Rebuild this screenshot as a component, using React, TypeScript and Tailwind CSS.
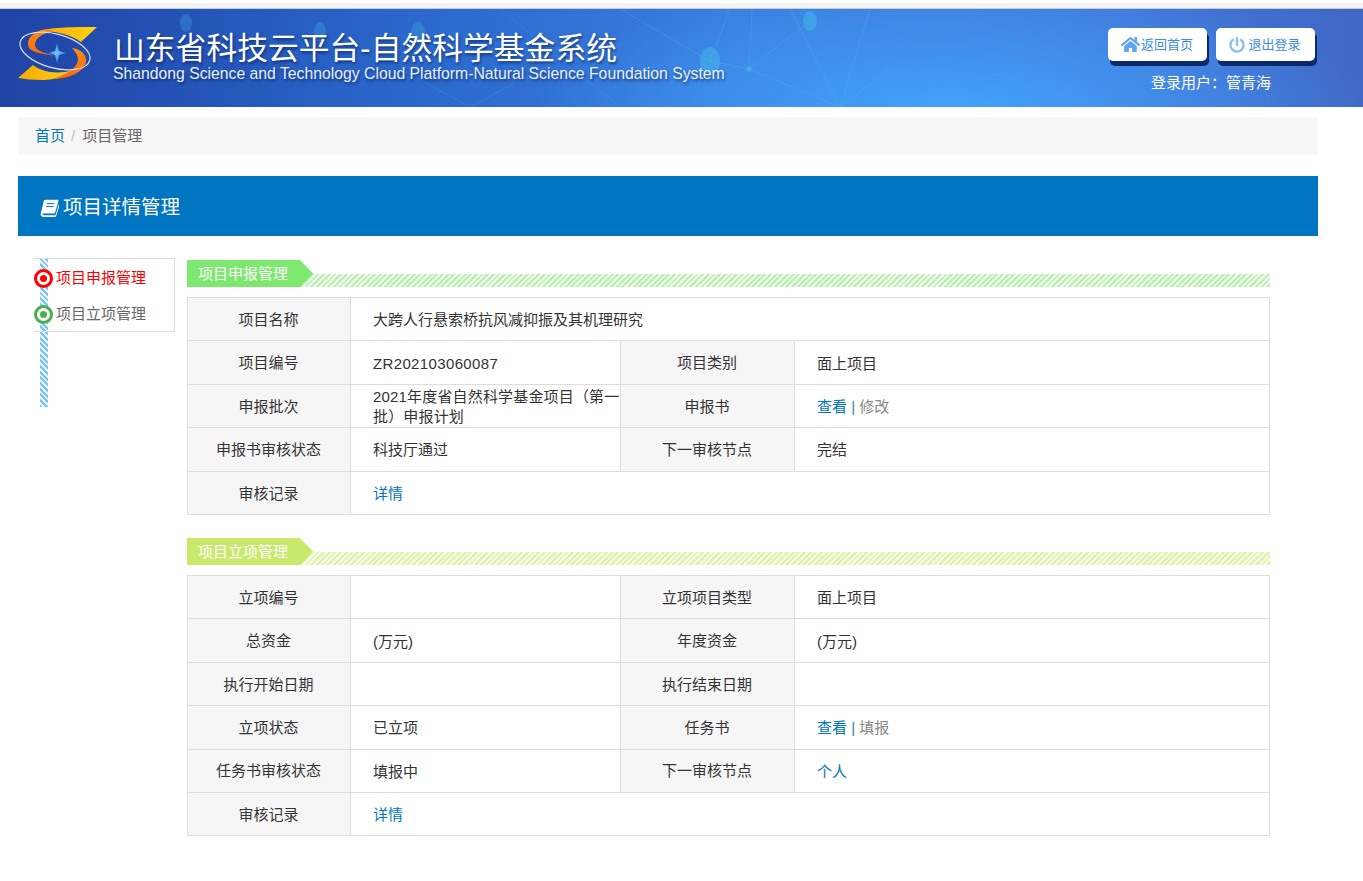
import React from 'react';
import { FaHome, FaPowerOff } from 'react-icons/fa';

const FONT = "font-['Liberation_Sans','Noto_Sans_CJK_SC',sans-serif]";

const labelCell = 'border border-[#ddd] bg-[#f6f6f6] text-center font-normal align-middle pl-[7px] pr-2 pt-[2px] pb-0';
const valueCell = 'border border-[#ddd] align-middle pl-[22px] pr-0 pt-[2px] pb-0 leading-[20px]';

const BookIcon = () => (
  <svg width="19" height="18" viewBox="0 0 19 18" fill="none">
    <path d="M5.2.8h12c1 0 1.4.7 1.1 1.6l-3 10.5c-.4 1.2-1 1.7-2.2 1.7H3.4c-.7 0-1.1.4-.9.9.2.5.7.7 1.4.7h10.8c.5 0 .9-.3 1.1-.8l3-10.2c.5.3.7.8.5 1.5l-2.900 9.700c-.3 1-1 1.600-2.100 1.600H3.600C1.900 18 .5 16.800.7 15.200c0-.4.1-.8.2-1.200L3.500 2.900C3.700 1.700 4.300.8 5.200.8z" fill="#fff" />
    <path d="M6.800 4.600h7.600M6 7.400h7.600" stroke="#0075c2" strokeWidth="1" />
  </svg>
);

const Logo = () => (
  <svg width="82" height="58" viewBox="0 0 82 58">
    <defs>
      <linearGradient id="lg-yellow" x1="0" y1="0" x2="1" y2="0">
        <stop offset="0" stopColor="#f9a800" />
        <stop offset="1" stopColor="#ffd414" />
      </linearGradient>
      <linearGradient id="lg-orange" x1="0" y1="0" x2="0" y2="1">
        <stop offset="0" stopColor="#ff8c14" />
        <stop offset="1" stopColor="#f5690c" />
      </linearGradient>
      <radialGradient id="lg-star">
        <stop offset="0" stopColor="#7cc4ff" />
        <stop offset="1" stopColor="#1f7fe8" />
      </radialGradient>
    </defs>
    <path d="M22 6 C34 2 60 2 80 2 L64 17 C54 9 36 6 22 6Z" fill="url(#lg-yellow)" />
    <path d="M1 53 L16 40 C26 48 44 50 58 44 C50 51 38 55 26 55 C16 55 8 54 1 53Z" fill="url(#lg-yellow)" />
    <path d="M30 4 C16 6 10 14 11 20 C12 27 24 29 40 31 C30 29 18 26 18 20 C18 14 24 8 38 6 Z" fill="url(#lg-orange)" />
    <path d="M55 23 C64 24 70 30 69 37 C67 47 52 54 36 54 C48 50 60 44 61 35 C61 30 58 26 55 23Z" fill="url(#lg-orange)" />
    <ellipse cx="38" cy="26" rx="36" ry="17" transform="rotate(15 38 26)" fill="none" stroke="#d4dfe8" strokeWidth="1.2" />
    <path d="M40 18 L42 26 L49 28 L42 30 L40 38 L38 30 L31 28 L38 26 Z" fill="url(#lg-star)" />
  </svg>
);

const BannerBackground = () => (
  <svg className="absolute inset-0 w-full h-full" viewBox="0 0 1363 98" preserveAspectRatio="none">
    <defs>
      <linearGradient id="banner" x1="0" y1="0" x2="1" y2="0">
        <stop offset="0" stopColor="#1f43a4" />
        <stop offset="0.3" stopColor="#2a68cc" />
        <stop offset="0.55" stopColor="#3a7ede" />
        <stop offset="0.8" stopColor="#4278da" />
        <stop offset="1" stopColor="#4068c6" />
      </linearGradient>
      <radialGradient id="glow" gradientUnits="userSpaceOnUse" cx="950" cy="110" r="420" gradientTransform="translate(0 72) scale(1 0.35)">
        <stop offset="0" stopColor="#42a4fc" stopOpacity="1" />
        <stop offset="1" stopColor="#42a4fc" stopOpacity="0" />
      </radialGradient>
    </defs>
    <rect width="1363" height="98" fill="url(#banner)" />
    <rect width="1363" height="98" fill="url(#glow)" />
    <g fill="#43b4ea" fillOpacity="0.3">
      <ellipse cx="186" cy="14" rx="6" ry="9" />
      <ellipse cx="320" cy="23" rx="6" ry="10" />
      <ellipse cx="418" cy="24" rx="7" ry="11" />
    </g>
    <g fill="#43b4ea" fillOpacity="0.55">
      <ellipse cx="710" cy="52" rx="10" ry="14" />
      <ellipse cx="810" cy="12" rx="7" ry="10" />
      <circle cx="749" cy="60" r="3" />
    </g>
    <g stroke="#5cc4f0" strokeOpacity="0.3" strokeWidth="0.8" fill="none">
      <path d="M730 0 L710 52 L749 60 L810 12 M749 60 L752 0 M749 60 L840 98 L890 60 M840 98 L790 0 M840 98 L870 0 M620 0 L710 52" />
      <path d="M400 60 L470 98 L560 50 L620 98 M560 50 L500 0" strokeOpacity="0.2" />
    </g>
  </svg>
);

const Section = ({ title, bg, stripe, children }: { title: string; bg: string; stripe: string; children: React.ReactNode }) => (
  <div>
    <div className="relative h-[27px] flex items-end">
      <div className={`absolute left-0 right-0 bottom-0 h-[13px] ${stripe}`} />
      <div className={`relative h-[27px] w-[113px] pl-[11px] text-white text-[15px] leading-[27px] ${bg}`}>{title}</div>
      <div className={`relative h-[27px] w-[13px] ${bg} [clip-path:polygon(0_0,100%_50%,0_100%)]`} />
    </div>
    <table className="w-full table-fixed border-collapse mt-[10px] text-[15px] text-[#333]">
      <colgroup>
        <col className="w-[163px]" />
        <col className="w-[270px]" />
        <col className="w-[174px]" />
        <col />
      </colgroup>
      <tbody>{children}</tbody>
    </table>
  </div>
);

const Row = ({ cells }: { cells: [string, React.ReactNode, string?, React.ReactNode?] }) => (
  <tr className="h-[43.4px]">
    <th className={labelCell}>{cells[0]}</th>
    {cells[2] === undefined ? (
      <td className={valueCell} colSpan={3}>{cells[1]}</td>
    ) : (
      <>
        <td className={valueCell}>{cells[1]}</td>
        <th className={labelCell}>{cells[2]}</th>
        <td className={valueCell}>{cells[3]}</td>
      </>
    )}
  </tr>
);

const Blue = ({ children }: { children: React.ReactNode }) => <a className="text-[#0075c2]">{children}</a>;

const ViewEdit = ({ edit }: { edit: string }) => (
  <span>
    <Blue>查看</Blue> <span className="text-[#337ab7]">|</span> <span className="text-[#888]">{edit}</span>
  </span>
);

export default function App() {
  return (
    <div className={`${FONT} bg-white min-h-[881px] text-[15px] text-[#333]`}>
      <div className="h-[9px] pt-[3px]">
        <div className="h-[5px] bg-[#f3f3f3] border-b border-[#ccc] box-content" />
      </div>

      <header className="relative h-[98px] overflow-hidden">
        <BannerBackground />
        <div className="relative flex justify-between h-full">
          <div className="flex pl-[17px] pt-[16px]">
            <Logo />
            <div className="ml-[15px] pt-[7px] text-white [text-shadow:1px_2px_3px_rgba(0,20,80,0.6)]">
              <div className="text-[30.8px] leading-[34px] whitespace-nowrap">山东省科技云平台-自然科学基金系统</div>
              <div className="ml-[-1px] text-[15.75px] leading-[20px] mt-[-2px] whitespace-nowrap text-[#e8f0fa]">Shandong Science and Technology Cloud Platform-Natural Science Foundation System</div>
            </div>
          </div>
          <div className="w-[208px] mr-[48px] pt-[19px] flex flex-col items-center">
            <div className="flex gap-[9px]">
              <button className="w-[99px] h-[33px] bg-white rounded-[5px] shadow-[2px_5px_0_#0a2a6e] text-[#3b8ee0] text-[13px] flex items-center justify-center gap-[1px]">
                <FaHome size={19} color="#5fa6ee" />
                返回首页
              </button>
              <button className="w-[99px] h-[33px] bg-white rounded-[5px] shadow-[2px_5px_0_#0a2a6e] text-[#3b8ee0] text-[13px] flex items-center justify-center gap-[3px]">
                <FaPowerOff size={16} color="#8cc0f2" />
                退出登录
              </button>
            </div>
            <div className="text-white mt-[12px] leading-[20px]">登录用户：管青海</div>
          </div>
        </div>
      </header>

      <nav className="mx-[18px] w-[1300px] mt-[10px] h-[38px] bg-[#f7f7f7] flex items-center pl-[17px]">
        <a className="text-[#0075c2]">首页</a>
        <span className="text-[#bbb] pl-[6px] pr-[7px]">/</span>
        <span className="text-[#666]">项目管理</span>
      </nav>

      <div className="ml-[18px] w-[1300px] mt-[21px] h-[60px] pt-[3px] bg-[#0075c2] flex items-center pl-[22px] text-white text-[19.5px] gap-[4px]">
        <BookIcon />
        项目详情管理
      </div>

      <div className="flex mt-[22px]">
        <aside className="relative ml-[34px] w-[141px] shrink-0 h-[149px]">
          <div className="absolute left-[6px] top-0 w-[8px] h-[149px] bg-[repeating-linear-gradient(45deg,#7cc3ee_0,#7cc3ee_2px,#e3f2fb_2px,#e3f2fb_4px)]" />
          <div className="absolute left-0 top-0 w-[141px] h-[74px] border-y border-r border-[#ddd]" />
          <ul className="relative pt-[2px]">
            <li className="h-[36px] flex items-center text-[#f00]">
              <span className="w-[19px] h-[19px] rounded-full border-[3px] border-[#f00] bg-white flex items-center justify-center">
                <span className="w-[7px] h-[7px] rounded-full bg-[#f00]" />
              </span>
              <span className="ml-[3px]">项目申报管理</span>
            </li>
            <li className="h-[36px] flex items-center text-[#666]">
              <span className="w-[19px] h-[19px] rounded-full border-[3px] border-[#4cae4c] bg-white flex items-center justify-center">
                <span className="w-[7px] h-[7px] rounded-full bg-[#4cae4c]" />
              </span>
              <span className="ml-[3px]">项目立项管理</span>
            </li>
          </ul>
        </aside>

        <main className="ml-[12px] w-[1083px] pt-[2px]">
          <Section
            title="项目申报管理"
            bg="bg-[#7de86e]"
            stripe="bg-[repeating-linear-gradient(135deg,#b8f0b0_0,#b8f0b0_2px,#f0fcee_2px,#f0fcee_4px)]"
          >
            <Row cells={['项目名称', '大跨人行悬索桥抗风减抑振及其机理研究']} />
            <Row cells={['项目编号', <span className="tracking-[0.36px]">ZR202103060087</span>, '项目类别', '面上项目']} />
            <Row cells={['申报批次', <span className="tracking-[0.17px]">2021年度省自然科学基金项目（第一批）申报计划</span>, '申报书', <ViewEdit edit="修改" />]} />
            <Row cells={['申报书审核状态', '科技厅通过', '下一审核节点', '完结']} />
            <Row cells={['审核记录', <Blue>详情</Blue>]} />
          </Section>

          <div className="mt-[23px]">
            <Section
              title="项目立项管理"
              bg="bg-[#c9e96c]"
              stripe="bg-[repeating-linear-gradient(135deg,#dff2ac_0,#dff2ac_2px,#f7fce6_2px,#f7fce6_4px)]"
            >
              <Row cells={['立项编号', '', '立项项目类型', '面上项目']} />
              <Row cells={['总资金', '(万元)', '年度资金', '(万元)']} />
              <Row cells={['执行开始日期', '', '执行结束日期', '']} />
              <Row cells={['立项状态', '已立项', '任务书', <ViewEdit edit="填报" />]} />
              <Row cells={['任务书审核状态', '填报中', '下一审核节点', <Blue>个人</Blue>]} />
              <Row cells={['审核记录', <Blue>详情</Blue>]} />
            </Section>
          </div>
        </main>
      </div>
    </div>
  );
}
